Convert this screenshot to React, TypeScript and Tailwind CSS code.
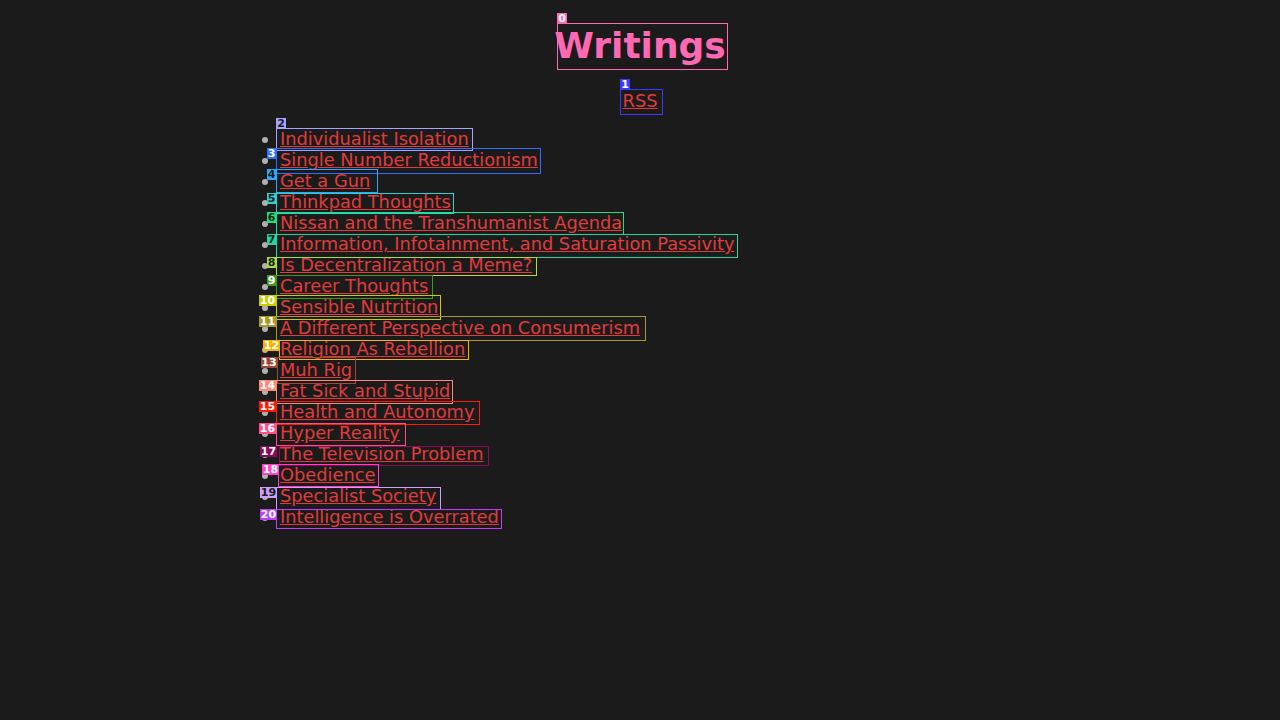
import React from "react";

const links = [
  "Individualist Isolation",
  "Single Number Reductionism",
  "Get a Gun",
  "Thinkpad Thoughts",
  "Nissan and the Transhumanist Agenda",
  "Information, Infotainment, and Saturation Passivity",
  "Is Decentralization a Meme?",
  "Career Thoughts",
  "Sensible Nutrition",
  "A Different Perspective on Consumerism",
  "Religion As Rebellion",
  "Muh Rig",
  "Fat Sick and Stupid",
  "Health and Autonomy",
  "Hyper Reality",
  "The Television Problem",
  "Obedience",
  "Specialist Society",
  "Intelligence is Overrated",
];

type Box = [number, number, number, number, string, number, number, number, boolean];
// x, y, w, h, color, labelX, labelY, labelW, darkText
const boxes: Box[] = [
  [557, 23, 171, 47, "#ff69b4", 557, 13, 10, false],
  [620, 89, 43, 26, "#3b3bff", 620, 79, 10, false],
  [276, 128, 197, 23, "#a5a5ff", 276, 118, 10, true],
  [276, 148, 265, 26, "#2f6fff", 267, 148, 9, false],
  [276, 169, 102, 24, "#2ea8ff", 267, 169, 9, true],
  [276, 193, 178, 21, "#2fd0d0", 267, 193, 9, true],
  [276, 212, 348, 23, "#19e37a", 267, 212, 9, true],
  [276, 234, 462, 24, "#23d6a0", 267, 234, 9, true],
  [276, 257, 261, 19, "#a6e03c", 267, 257, 9, true],
  [276, 275, 157, 24, "#3f9a1c", 267, 275, 9, false],
  [276, 295, 165, 25, "#c8cc00", 259, 295, 17, false],
  [276, 316, 370, 25, "#a89a28", 259, 316, 17, false],
  [279, 340, 190, 20, "#f5b400", 263, 340, 17, false],
  [277, 357, 79, 27, "#9a4a3a", 261, 357, 16, false],
  [276, 380, 177, 24, "#ff8a78", 259, 380, 17, false],
  [276, 401, 204, 24, "#ff1a00", 259, 401, 17, false],
  [276, 423, 130, 23, "#ff4e8c", 259, 423, 17, false],
  [279, 446, 210, 20, "#8a0a55", 260, 446, 17, false],
  [278, 464, 101, 23, "#ff3fc8", 262, 464, 17, false],
  [276, 487, 165, 23, "#c9a0ff", 260, 487, 17, true],
  [276, 509, 226, 20, "#c13cff", 260, 509, 17, false],
];

export default function App() {
  return (
    <div
      className="relative h-[720px] w-full overflow-hidden bg-[#1b1b1b] text-[17.8px] leading-[21px] text-[#bbbbbb]"
      style={{ fontFamily: '"DejaVu Sans", Verdana, sans-serif' }}
    >
      <div className="mx-auto w-[800px]">
        <h1 className="mt-[23px] mb-[20px] text-center text-[36px] leading-[46px] font-bold text-[#ff69b4]">
          Writings
        </h1>
        <p className="mb-[16px] text-center leading-[23px]">
          <a href="#" className="text-[#e03c3c] underline">
            RSS
          </a>
        </p>
        <ul className="list-disc pl-[40px] marker:text-[#b0b0b0]">
          {links.map((t) => (
            <li key={t} className="leading-[21px]">
              <a href="#" className="text-[#e03c3c] underline">
                {t}
              </a>
            </li>
          ))}
        </ul>
      </div>

      <div className="pointer-events-none absolute inset-0">
        {boxes.map(([x, y, w, h, c, lx, ly, lw, dark], i) => (
          <React.Fragment key={i}>
            <div
              className="absolute border"
              style={{ left: x, top: y, width: w, height: h, borderColor: c }}
            />
            <div
              className={
                "absolute flex items-center justify-center text-[11px] leading-[11px] font-bold " +
                (dark ? "text-[#1b1b1b]" : "text-white")
              }
              style={{ left: lx, top: ly, width: lw, height: 11, backgroundColor: c }}
            >
              {i}
            </div>
          </React.Fragment>
        ))}
      </div>
    </div>
  );
}
